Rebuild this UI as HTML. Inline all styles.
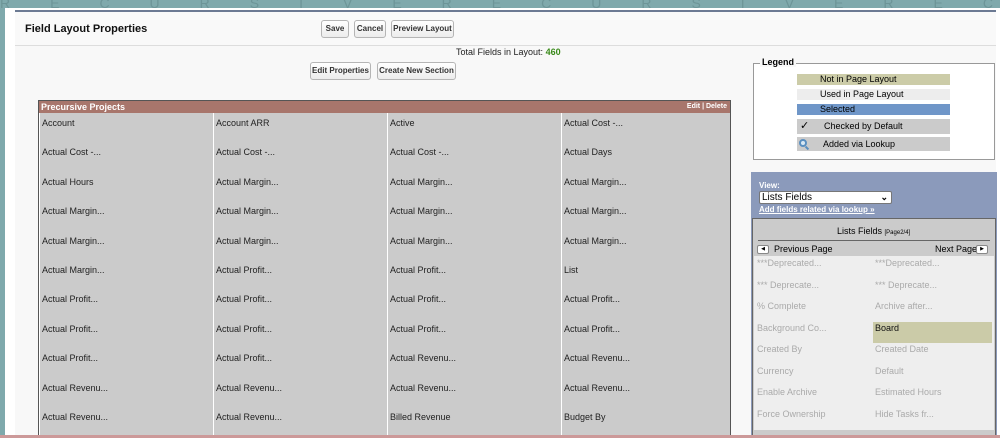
<!DOCTYPE html><html><head><style>
*{margin:0;padding:0;box-sizing:border-box}
body{width:1000px;height:438px;overflow:hidden;background:#7fa9ac;font-family:"Liberation Sans",Arial,sans-serif;position:relative}
.a{position:absolute}
.btn{position:absolute;height:18px;border:1px solid #b5b5b5;border-radius:3px;background:linear-gradient(#fff,#ececec);font-size:8px;font-weight:bold;color:#333;text-align:center;line-height:16px;white-space:nowrap}
.cell{position:absolute;font-size:9px;color:#222}
.lf{position:absolute;font-size:9px;color:#aaa}
</style></head><body>
<div class="a" style="left:0;top:0;width:1000px;height:8px;color:#6d9598;font-size:14px;letter-spacing:40px;line-height:6px;overflow:hidden">RECURSIVERECURSIVERECURSIVE</div>
<div class="a" style="left:5px;top:8px;width:995px;height:430px;background:#fff"></div>
<div class="a" style="left:15px;top:10px;width:981px;height:428px;background:#f8f8f8;border-top:2px solid #6c7a93"></div>
<div class="a" style="left:15px;top:12px;width:981px;height:34px;background:#f9f9f9;border-bottom:1px solid #ddd"></div>
<div class="a" style="left:25px;top:23px;font-size:11px;font-weight:bold;color:#111">Field Layout Properties</div>
<div class="btn" style="left:321px;top:20px;width:28px">Save</div>
<div class="btn" style="left:354px;top:20px;width:32px">Cancel</div>
<div class="btn" style="left:391px;top:20px;width:63px">Preview Layout</div>
<div class="a" style="left:456px;top:47px;font-size:9px;color:#222">Total Fields in Layout: <b style="color:#3a8a1a">460</b></div>
<div class="btn" style="left:310px;top:62px;width:61px">Edit Properties</div>
<div class="btn" style="left:377px;top:62px;width:79px">Create New Section</div>
<div class="a" style="left:38px;top:100px;width:693px;height:338px;border:1px solid #555;border-bottom:none;background:#fff"></div>
<div class="a" style="left:39px;top:101px;width:691px;height:12px;background:#a8766c;color:#fff;font-size:9px;font-weight:bold;line-height:12px;padding-left:2px">Precursive Projects<span style="position:absolute;right:3px;font-size:7px">Edit | Delete</span></div>
<div class="a" style="left:40px;top:113px;width:173px;height:325px;background:#cbcbcb"></div>
<div class="a" style="left:214px;top:113px;width:173px;height:325px;background:#cbcbcb"></div>
<div class="a" style="left:388px;top:113px;width:173px;height:325px;background:#cbcbcb"></div>
<div class="a" style="left:562px;top:113px;width:168px;height:325px;background:#cbcbcb"></div>
<div id="cells"></div>
<div class="a" style="left:753px;top:63px;width:242px;height:97px;border:1px solid #999;background:#fff"></div>
<div class="a" style="left:760px;top:57px;background:#f8f8f8;padding:0 2px;font-size:9px;font-weight:bold">Legend</div>
<div class="a" style="left:797px;top:74px;width:153px;height:11px;background:#cccca8;font-size:9px;line-height:11px;padding-left:23px">Not in Page Layout</div>
<div class="a" style="left:797px;top:89px;width:153px;height:11px;background:#ededed;font-size:9px;line-height:11px;padding-left:23px">Used in Page Layout</div>
<div class="a" style="left:797px;top:104px;width:153px;height:11px;background:#6f96c8;font-size:9px;line-height:11px;padding-left:23px">Selected</div>
<div class="a" style="left:797px;top:119px;width:153px;height:15px;background:#cbcbcb;font-size:9px;line-height:15px;padding-left:27px"><span style="position:absolute;left:3px;font-size:11px">✓</span>Checked by Default</div>
<div class="a" style="left:797px;top:137px;width:153px;height:14px;background:#cbcbcb;font-size:9px;line-height:14px;padding-left:26px"><span style="position:absolute;left:2px;top:2px;width:8px;height:8px;border:2px solid #5a8fc0;border-radius:50%;background:#d8e8f4"></span><span style="position:absolute;left:9px;top:9px;width:2px;height:4px;background:#5a8fc0;transform:rotate(-45deg)"></span>Added via Lookup</div>
<div class="a" style="left:751px;top:172px;width:246px;height:266px;background:#8b9abb"></div>
<div class="a" style="left:759px;top:181px;font-size:8px;font-weight:bold;color:#fff">View:</div>
<div class="a" style="left:759px;top:191px;width:133px;height:13px;background:#fff;border:1px solid #777;border-radius:2px;font-size:10px;line-height:11px;padding-left:2px">Lists Fields<span style="position:absolute;right:3px;font-size:9px;font-weight:bold">⌄</span></div>
<div class="a" style="left:759px;top:205px;font-size:8px;font-weight:bold;color:#fff;text-decoration:underline">Add fields related via lookup »</div>
<div class="a" style="left:752px;top:218px;width:244px;height:220px;background:#cbcbcb;border:1px solid #666"></div>
<div class="a" style="left:837px;top:226px;font-size:9px">Lists Fields <span style="font-size:6px">[Page2/4]</span></div>
<div class="a" style="left:758px;top:240px;width:232px;height:1px;background:#666"></div>
<div class="a" style="left:757px;top:245px;width:12px;height:9px;background:#fff;border:1px solid #888;border-radius:2px;font-size:5px;text-align:center;line-height:7px">◀</div>
<div class="a" style="left:774px;top:244px;font-size:9px">Previous Page</div>
<div class="a" style="left:935px;top:244px;font-size:9px">Next Page</div>
<div class="a" style="left:976px;top:245px;width:12px;height:9px;background:#fff;border:1px solid #888;border-radius:2px;font-size:5px;text-align:center;line-height:7px">▶</div>
<div class="a" style="left:754px;top:256px;width:240px;height:174px;background:#eee"></div>
<div class="a" style="left:873px;top:322px;width:119px;height:21px;background:#cbcba8"></div>
<div id="lf"></div>
<div class="a" style="left:0;top:435px;width:1000px;height:3px;background:#c99"></div>
<script>
var c=[["Account","Account ARR","Active","Actual Cost -..."],["Actual Cost -...","Actual Cost -...","Actual Cost -...","Actual Days"],["Actual Hours","Actual Margin...","Actual Margin...","Actual Margin..."],["Actual Margin...","Actual Margin...","Actual Margin...","Actual Margin..."],["Actual Margin...","Actual Margin...","Actual Margin...","Actual Margin..."],["Actual Margin...","Actual Profit...","Actual Profit...","List"],["Actual Profit...","Actual Profit...","Actual Profit...","Actual Profit..."],["Actual Profit...","Actual Profit...","Actual Profit...","Actual Profit..."],["Actual Profit...","Actual Profit...","Actual Revenu...","Actual Revenu..."],["Actual Revenu...","Actual Revenu...","Actual Revenu...","Actual Revenu..."],["Actual Revenu...","Actual Revenu...","Billed Revenue","Budget By"]];
var x=[42,216,390,564],h="";
c.forEach(function(r,i){r.forEach(function(t,j){h+='<div class="cell" style="left:'+x[j]+'px;top:'+(118+i*29.4)+'px">'+t+'</div>'})});
document.getElementById('cells').innerHTML=h;
var l=[["***Deprecated...","***Deprecated..."],["*** Deprecate...","*** Deprecate..."],["% Complete","Archive after..."],["Background Co...","Board"],["Created By","Created Date"],["Currency","Default"],["Enable Archive","Estimated Hours"],["Force Ownership","Hide Tasks fr..."]];
h="";l.forEach(function(r,i){r.forEach(function(t,j){h+='<div class="lf" style="left:'+(j?875:757)+'px;top:'+(258+i*21.5)+'px;'+(t=="Board"?"color:#111":"")+'">'+t+'</div>'})});
document.getElementById('lf').innerHTML=h;
</script>
</body></html>
